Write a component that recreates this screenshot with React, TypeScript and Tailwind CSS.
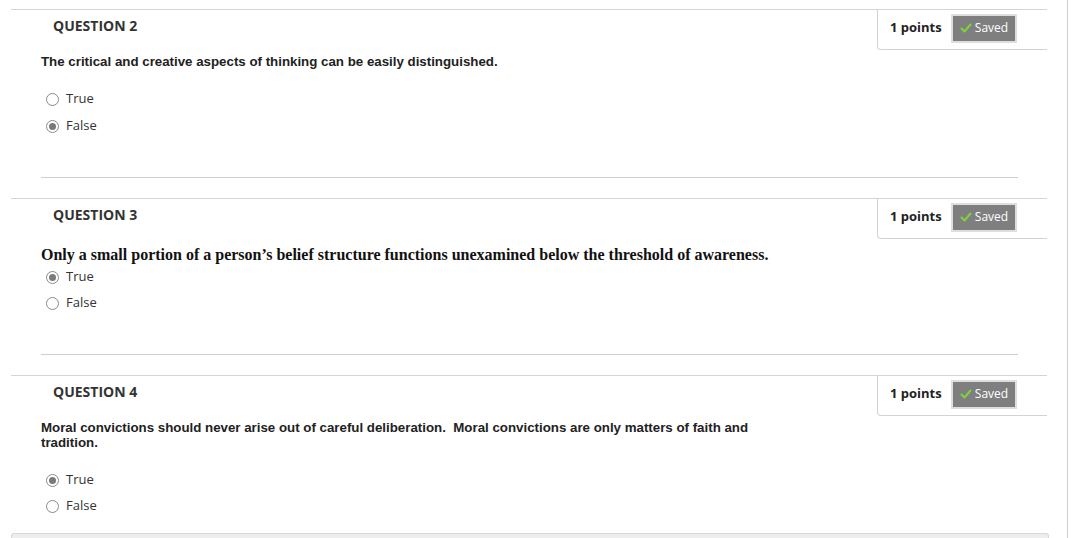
import React from "react";

const openSans = { fontFamily: '"Open Sans", "Noto Sans", sans-serif' };

function Radio({ checked }: { checked: boolean }) {
  return (
    <span className="relative inline-flex h-[13px] w-[13px] items-center justify-center rounded-full border border-[#8a8a8a] bg-white">
      {checked && <span className="h-[7px] w-[7px] rounded-full bg-[#7a7a7a]" />}
    </span>
  );
}

function Option({ label, checked }: { label: string; checked: boolean }) {
  return (
    <div className="flex h-[26px] items-center pl-[5px]">
      <Radio checked={checked} />
      <span className="ml-[7px] text-[13px] text-[#333]" style={openSans}>
        {label}
      </span>
    </div>
  );
}

function SavedBadge() {
  return (
    <div className="flex h-[29px] w-[66px] items-center justify-center gap-[3px] border-2 border-[#dedede] bg-[#7f7f7f]">
      <svg width="12" height="10" viewBox="0 0 12 10">
        <path d="M1.5 5.5 L4.5 8.5 L10.5 1.5" fill="none" stroke="#7fd33a" strokeWidth="2" strokeLinecap="round" strokeLinejoin="round" />
      </svg>
      <span className="text-[12px] text-white" style={openSans}>
        Saved
      </span>
    </div>
  );
}

function Header({ n }: { n: number }) {
  return (
    <div className="flex h-[40px] items-start justify-between">
      <div className="pl-[42px] pt-[6px] text-[14px] font-bold leading-[20px] text-[#333]" style={openSans}>
        QUESTION {n}
      </div>
      <div className="flex h-[40px] w-[170px] items-center rounded-bl-[4px] border-b border-l border-[#d3d3d3] pb-[3px] pl-[12px]">
        <span className="w-[61px] text-[13px] font-bold text-[#222]" style={openSans}>
          1 points
        </span>
        <SavedBadge />
      </div>
    </div>
  );
}

function Question({
  n,
  children,
  options,
  textClass,
  optionsClass,
}: {
  n: number;
  children: React.ReactNode;
  options: [string, boolean][];
  textClass: string;
  optionsClass: string;
}) {
  return (
    <div className="border-t border-[#d4d4d4]">
      <Header n={n} />
      <div className="pl-[30px]">
        <div className={textClass}>{children}</div>
        <div className={optionsClass}>
          {options.map(([l, c]) => (
            <Option key={l} label={l} checked={c} />
          ))}
        </div>
      </div>
    </div>
  );
}

const arial = { fontFamily: '"Liberation Sans", Arial, sans-serif' };

export default function App() {
  return (
    <div className="min-h-[538px] w-[1071px] overflow-hidden bg-white">
      <div className="min-h-[538px] w-[1068px] border-r border-[#cfcfcf] pt-[9px]">
        <div className="ml-[11px] w-[1036px]">
          <Question
            n={2}
            textClass="mt-[4px] text-[13.3px] font-bold leading-[15px] text-[#222]"
            optionsClass="mt-[17px] flex flex-col gap-[1px]"
            options={[
              ["True", false],
              ["False", true],
            ]}
          >
            <span style={arial}>The critical and creative aspects of thinking can be easily distinguished.</span>
          </Question>
          <div className="ml-[30px] mr-[29px] mt-[38px] border-t border-[#cfcfcf]" />
          <div className="mt-[20px]">
            <Question
              n={3}
              textClass="mt-[6px] text-[16px] font-bold leading-[19px] text-[#111]"
              optionsClass="mt-0"
              options={[
                ["True", true],
                ["False", false],
              ]}
            >
              <span style={{ fontFamily: '"Liberation Serif", "Times New Roman", serif' }}>
                Only a small portion of a person’s belief structure functions unexamined below the threshold of awareness.
              </span>
            </Question>
          </div>
          <div className="ml-[30px] mr-[29px] mt-[38px] border-t border-[#cfcfcf]" />
          <div className="mt-[20px]">
            <Question
              n={4}
              textClass="mt-[4px] w-[720px] text-[13.3px] font-bold leading-[15px] text-[#222]"
              optionsClass="mt-[17px]"
              options={[
                ["True", true],
                ["False", false],
              ]}
            >
              <span style={arial}>
                Moral convictions should never arise out of careful deliberation.&nbsp; Moral convictions are only matters of faith and tradition.
              </span>
            </Question>
          </div>
          <div className="mt-[14px] h-[20px] w-[1038px] rounded-t-[3px] border border-b-0 border-[#d8d8d8] bg-gradient-to-b from-[#ececec] to-[#f8f8f8]" />
        </div>
      </div>
    </div>
  );
}
